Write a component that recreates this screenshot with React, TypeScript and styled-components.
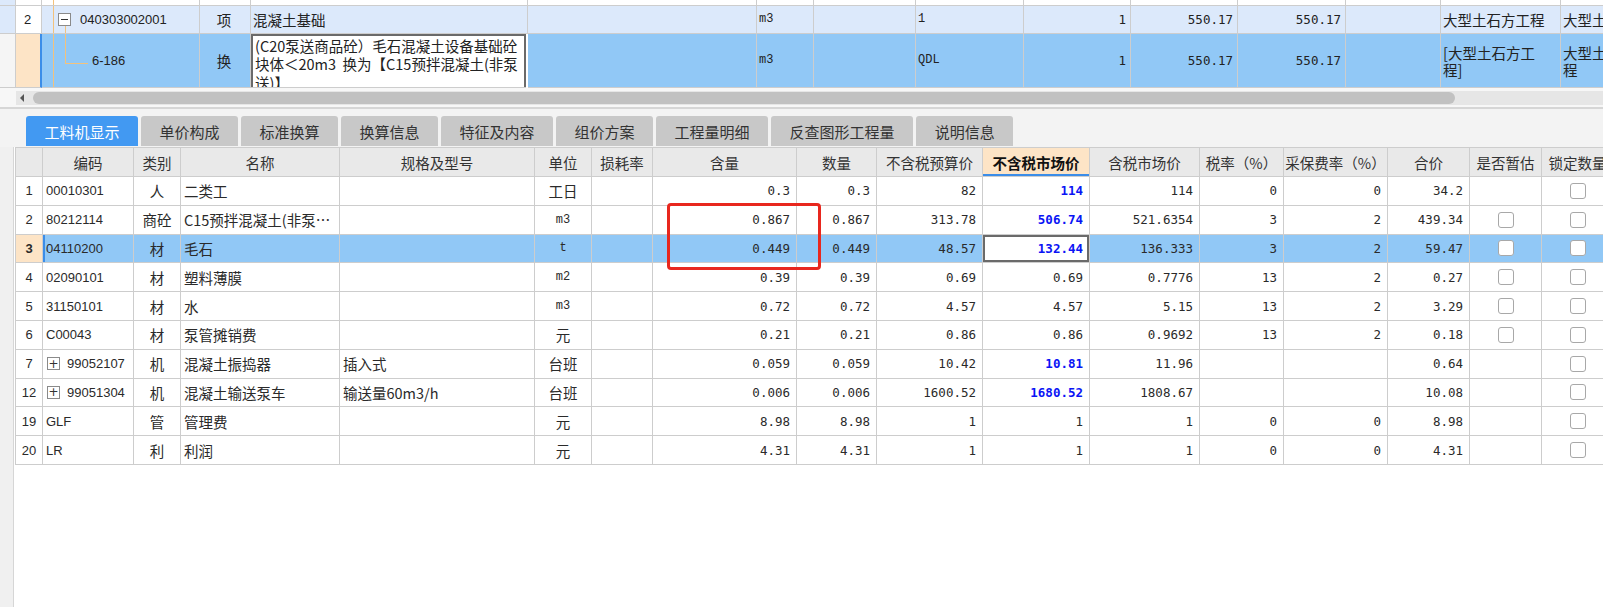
import React from 'react';
import styled, { createGlobalStyle, css } from 'styled-components';

const GlobalStyle = createGlobalStyle`
  html, body { margin: 0; padding: 0; }
  body {
    width: 1603px;
    height: 607px;
    overflow: hidden;
    background: #f3f3f3;
    font-family: "Noto Sans CJK SC", "Noto Sans", sans-serif;
    color: #222;
  }
  * { box-sizing: border-box; }
`;

type Align = 'left' | 'center' | 'right';
type FontKind = 'cjk' | 'num' | 'code' | 'mono';

const fontCss = (f: FontKind = 'cjk') => {
  switch (f) {
    case 'num':
      return css`font-family: "DejaVu Sans Mono", "Liberation Mono", monospace; font-size: 12.5px;`;
    case 'code':
      return css`font-family: "Liberation Sans", Arial, sans-serif; font-size: 13px;`;
    case 'mono':
      return css`font-family: "Liberation Mono", "DejaVu Sans Mono", monospace; font-size: 12px;`;
    default:
      return css`font-family: "Noto Sans CJK SC", "Noto Sans", sans-serif; font-size: 14.5px;`;
  }
};

const justify = (a: Align = 'left') =>
  a === 'right' ? 'flex-end' : a === 'center' ? 'center' : 'flex-start';

const LINE = '#cdcdcd';
const LIGHT_BLUE = '#dce9fb';
const SEL_BLUE = '#91c8f6';
const PEACH = '#fde4c6';
const ACCENT = '#3b8de8';
const ORANGE = '#f3c27c';

const Page = styled.div`
  width: 1603px;
  height: 607px;
  display: flex;
  flex-direction: column;
  overflow: hidden;
  background: #f3f3f3;
`;

/* ---------- top (bill items) grid ---------- */
const TopGrid = styled.div`
  display: grid;
  grid-template-columns: 16px 26px 158px 51px 277px 229px 57px 102px 108px 107px 107px 108px 95px 120px 80px;
  grid-template-rows: 6px 28px 54px;
  height: 88px;
  overflow: hidden;
  background: #fff;
`;

const TopCell = styled.div<{ $bg?: string; $align?: Align; $font?: FontKind; $sel?: boolean }>`
  position: relative;
  display: flex;
  align-items: center;
  justify-content: ${p => justify(p.$align)};
  padding: 0 4px 0 2px;
  border-right: 1px solid ${LINE};
  border-bottom: 1px solid ${LINE};
  background: ${p => p.$bg ?? '#fff'};
  overflow: hidden;
  white-space: pre;
  line-height: 17px;
  color: #222;
  ${p => fontCss(p.$font)}
  ${p => p.$sel && css`border-right: 2px solid ${ACCENT};`}
`;

const NameEditor = styled.div`
  background: #fff;
  box-shadow: inset 2px 2px 0 #6a6a6a, inset -2px 0 0 #6a6a6a;
  padding: 3px 4px 0 4px;
  margin-right: 2px;
  border-bottom: 1px solid ${LINE};
  white-space: pre;
  overflow: hidden;
  line-height: 18.3px;
  font-family: "Noto Sans CJK SC", "Noto Sans", sans-serif;
  font-size: 14.5px;
  color: #222;
`;

const VLine = styled.span<{ $left: number; $top: number; $bottom?: number; $h?: number }>`
  position: absolute;
  left: ${p => p.$left}px;
  top: ${p => p.$top}px;
  ${p => (p.$h !== undefined ? css`height: ${p.$h}px;` : css`bottom: ${p.$bottom ?? -1}px;`)}
  width: 1px;
  background: ${ORANGE};
`;

const HLine = styled.span<{ $left: number; $top: number; $w: number }>`
  position: absolute;
  left: ${p => p.$left}px;
  top: ${p => p.$top}px;
  width: ${p => p.$w}px;
  height: 1px;
  background: ${ORANGE};
`;

const CollapseBox = styled.span`
  position: absolute;
  left: 16px;
  top: 7px;
  width: 13px;
  height: 13px;
  border: 1px solid #8a8a8a;
  background: #fff;
  &::after {
    content: '';
    position: absolute;
    left: 2px;
    right: 2px;
    top: 5px;
    height: 1px;
    background: #333;
  }
`;

const TreeText = styled.span<{ $indent: number }>`
  margin-left: ${p => p.$indent}px;
  font-family: "Liberation Sans", Arial, sans-serif;
  font-size: 13px;
  color: #222;
`;

/* ---------- horizontal scroll bar ---------- */
const ScrollRow = styled.div`
  height: 19px;
  padding: 3px 0 0 16px;
  background: #f7f7f7;
`;

const ScrollTrack = styled.div`
  height: 14px;
  background: #e6e6e6;
  display: flex;
  align-items: center;
`;

const ArrowLeft = styled.span`
  width: 0;
  height: 0;
  margin-left: 4px;
  border-top: 4px solid transparent;
  border-bottom: 4px solid transparent;
  border-right: 4px solid #555;
`;

const Thumb = styled.div`
  margin-left: 9px;
  width: 1422px;
  height: 12px;
  border-radius: 6px;
  background: #c1c1c1;
`;

const Divider = styled.div`
  height: 2px;
  background: #d6d6d6;
`;

/* ---------- tabs ---------- */
const TabBar = styled.div`
  height: 38px;
  display: flex;
  align-items: flex-end;
  gap: 3px;
  padding: 0 0 1px 26px;
  background: #f3f3f3;
`;

const Tab = styled.div<{ $active?: boolean }>`
  height: 30px;
  padding: 0 18.5px;
  display: flex;
  align-items: center;
  border-radius: 3px 3px 0 0;
  font-family: "Noto Sans CJK SC", "Noto Sans", sans-serif;
  font-size: 15px;
  white-space: nowrap;
  background: ${p => (p.$active ? '#4299f2' : '#c8c8c8')};
  color: ${p => (p.$active ? '#fff' : '#333')};
`;

/* ---------- bottom (resource) grid ---------- */
const Bottom = styled.div`
  flex: 1;
  display: flex;
  min-height: 0;
`;

const LeftStrip = styled.div`
  width: 14px;
  flex: none;
  background: #f0f0f0;
  border-right: 1px solid #d6d6d6;
`;

const GridWrap = styled.div`
  position: relative;
  flex: 1;
  background: #fff;
  padding-left: 1px;
  overflow: hidden;
`;

const COLS = [27, 91, 47, 159, 195, 57, 61, 144, 80, 106, 107, 110, 84, 104, 82, 72, 72];

const Grid = styled.div`
  display: grid;
  grid-template-columns: ${COLS.map(c => `${c}px`).join(' ')};
  grid-template-rows: 29px;
  grid-auto-rows: 28.8px;
  width: ${COLS.reduce((a, b) => a + b, 0) + 1}px;
  border-left: 1px solid ${LINE};
  border-top: 1px solid ${LINE};
`;

const HeadCell = styled.div<{ $hot?: boolean }>`
  display: flex;
  align-items: center;
  justify-content: center;
  white-space: nowrap;
  overflow: hidden;
  background: ${p => (p.$hot ? PEACH : '#e9e9e9')};
  border-right: 1px solid ${LINE};
  border-bottom: 1px solid ${LINE};
  font-family: "Noto Sans CJK SC", "Noto Sans", sans-serif;
  font-size: 14.5px;
  color: #333;
  ${p =>
    p.$hot &&
    css`
      font-weight: 700;
      color: #111;
      box-shadow: inset 0 -2px 0 ${ACCENT};
    `}
`;

const Cell = styled.div<{
  $align?: Align;
  $font?: FontKind;
  $bg?: string;
  $bold?: boolean;
  $blue?: boolean;
  $focus?: boolean;
  $lead?: boolean;
}>`
  display: flex;
  align-items: center;
  justify-content: ${p => justify(p.$align)};
  padding: 0 ${p => (p.$align === 'right' ? 6 : 3)}px 0 3px;
  white-space: nowrap;
  overflow: hidden;
  border-right: 1px solid ${LINE};
  border-bottom: 1px solid ${LINE};
  background: ${p => p.$bg ?? '#fff'};
  color: ${p => (p.$blue ? '#0a14f5' : '#2a2a2a')};
  font-weight: ${p => (p.$bold || p.$blue ? 700 : 400)};
  ${p => fontCss(p.$font)}
  ${p => p.$focus && css`box-shadow: inset 0 0 0 2px #6a6a6a;`}
  ${p => p.$lead && css`box-shadow: inset 2px 0 0 ${ACCENT};`}
`;

const Expander = styled.span`
  width: 13px;
  height: 13px;
  margin: 0 7px 0 1px;
  border: 1px solid #8a8a8a;
  display: inline-flex;
  align-items: center;
  justify-content: center;
  font-family: "DejaVu Sans", sans-serif;
  font-size: 12px;
  line-height: 1;
  color: #333;
`;

const Check = styled.span`
  width: 16px;
  height: 16px;
  border: 1px solid #a8a8a8;
  border-radius: 3px;
  background: #fff;
`;

const Highlight = styled.div`
  position: absolute;
  left: 653px;
  top: 56px;
  width: 154px;
  height: 67px;
  border: 3px solid #e8271e;
  border-radius: 4px;
  pointer-events: none;
`;

type Row = {
  no: string;
  code: string;
  expand?: boolean;
  kind: string;
  name: string;
  spec: string;
  unit: string;
  unitMono?: boolean;
  qtyPer: string;
  qty: string;
  budget: string;
  market: string;
  marketBlue?: boolean;
  taxMarket: string;
  tax: string;
  fee: string;
  total: string;
  est: boolean;
  lock: boolean;
  selected?: boolean;
};

const rows: Row[] = [
  { no: '1', code: '00010301', kind: '人', name: '二类工', spec: '', unit: '工日', qtyPer: '0.3', qty: '0.3', budget: '82', market: '114', marketBlue: true, taxMarket: '114', tax: '0', fee: '0', total: '34.2', est: false, lock: true },
  { no: '2', code: '80212114', kind: '商砼', name: 'C15预拌混凝土(非泵…', spec: '', unit: 'm3', unitMono: true, qtyPer: '0.867', qty: '0.867', budget: '313.78', market: '506.74', marketBlue: true, taxMarket: '521.6354', tax: '3', fee: '2', total: '439.34', est: true, lock: true },
  { no: '3', code: '04110200', kind: '材', name: '毛石', spec: '', unit: 't', unitMono: true, qtyPer: '0.449', qty: '0.449', budget: '48.57', market: '132.44', marketBlue: true, taxMarket: '136.333', tax: '3', fee: '2', total: '59.47', est: true, lock: true, selected: true },
  { no: '4', code: '02090101', kind: '材', name: '塑料薄膜', spec: '', unit: 'm2', unitMono: true, qtyPer: '0.39', qty: '0.39', budget: '0.69', market: '0.69', taxMarket: '0.7776', tax: '13', fee: '2', total: '0.27', est: true, lock: true },
  { no: '5', code: '31150101', kind: '材', name: '水', spec: '', unit: 'm3', unitMono: true, qtyPer: '0.72', qty: '0.72', budget: '4.57', market: '4.57', taxMarket: '5.15', tax: '13', fee: '2', total: '3.29', est: true, lock: true },
  { no: '6', code: 'C00043', kind: '材', name: '泵管摊销费', spec: '', unit: '元', qtyPer: '0.21', qty: '0.21', budget: '0.86', market: '0.86', taxMarket: '0.9692', tax: '13', fee: '2', total: '0.18', est: true, lock: true },
  { no: '7', code: '99052107', expand: true, kind: '机', name: '混凝土振捣器', spec: '插入式', unit: '台班', qtyPer: '0.059', qty: '0.059', budget: '10.42', market: '10.81', marketBlue: true, taxMarket: '11.96', tax: '', fee: '', total: '0.64', est: false, lock: true },
  { no: '12', code: '99051304', expand: true, kind: '机', name: '混凝土输送泵车', spec: '输送量60m3/h', unit: '台班', qtyPer: '0.006', qty: '0.006', budget: '1600.52', market: '1680.52', marketBlue: true, taxMarket: '1808.67', tax: '', fee: '', total: '10.08', est: false, lock: true },
  { no: '19', code: 'GLF', kind: '管', name: '管理费', spec: '', unit: '元', qtyPer: '8.98', qty: '8.98', budget: '1', market: '1', taxMarket: '1', tax: '0', fee: '0', total: '8.98', est: false, lock: true },
  { no: '20', code: 'LR', kind: '利', name: '利润', spec: '', unit: '元', qtyPer: '4.31', qty: '4.31', budget: '1', market: '1', taxMarket: '1', tax: '0', fee: '0', total: '4.31', est: false, lock: true },
];

const headers = [
  '', '编码', '类别', '名称', '规格及型号', '单位', '损耗率', '含量', '数量',
  '不含税预算价', '不含税市场价', '含税市场价', '税率（%）', '采保费率（%）', '合价', '是否暂估', '锁定数量',
];

const tabs = ['工料机显示', '单价构成', '标准换算', '换算信息', '特征及内容', '组价方案', '工程量明细', '反查图形工程量', '说明信息'];

const ResourceRow: React.FC<{ r: Row }> = ({ r }) => {
  const bg = r.selected ? SEL_BLUE : '#fff';
  return (
    <>
      <Cell $align="center" $font="code" $bg={r.selected ? PEACH : '#fff'} $bold={r.selected}>{r.no}</Cell>
      <Cell $font="code" $bg={bg} $lead={r.selected}>
        {r.expand && <Expander>+</Expander>}
        {r.code}
      </Cell>
      <Cell $align="center" $bg={bg}>{r.kind}</Cell>
      <Cell $bg={bg}>{r.name}</Cell>
      <Cell $bg={bg}>{r.spec}</Cell>
      <Cell $align="center" $font={r.unitMono ? 'mono' : 'cjk'} $bg={bg}>{r.unit}</Cell>
      <Cell $bg={bg} />
      <Cell $align="right" $font="num" $bg={bg}>{r.qtyPer}</Cell>
      <Cell $align="right" $font="num" $bg={bg}>{r.qty}</Cell>
      <Cell $align="right" $font="num" $bg={bg}>{r.budget}</Cell>
      <Cell $align="right" $font="num" $bg={r.selected ? '#fff' : bg} $blue={r.marketBlue} $focus={r.selected}>{r.market}</Cell>
      <Cell $align="right" $font="num" $bg={bg}>{r.taxMarket}</Cell>
      <Cell $align="right" $font="num" $bg={bg}>{r.tax}</Cell>
      <Cell $align="right" $font="num" $bg={bg}>{r.fee}</Cell>
      <Cell $align="right" $font="num" $bg={bg}>{r.total}</Cell>
      <Cell $align="center" $bg={bg}>{r.est && <Check />}</Cell>
      <Cell $align="center" $bg={bg}>{r.lock && <Check />}</Cell>
    </>
  );
};

export default function App() {
  return (
    <>
      <GlobalStyle />
      <Page>
        <TopGrid>
          {/* partially visible row above */}
          <TopCell $bg={LIGHT_BLUE} />
          <TopCell />
          <TopCell><VLine $left={11} $top={0} /></TopCell>
          {Array.from({ length: 12 }).map((_, i) => (
            <TopCell key={`p${i}`} />
          ))}

          {/* bill row 2 */}
          <TopCell $bg={LIGHT_BLUE} />
          <TopCell $align="center" $font="code">2</TopCell>
          <TopCell $bg={LIGHT_BLUE}>
            <VLine $left={11} $top={0} />
            <CollapseBox />
            <VLine $left={23} $top={20} />
            <TreeText $indent={36}>040303002001</TreeText>
          </TopCell>
          <TopCell $bg={LIGHT_BLUE} $align="center">项</TopCell>
          <TopCell $bg={LIGHT_BLUE}>混凝土基础</TopCell>
          <TopCell $bg={LIGHT_BLUE} />
          <TopCell $bg={LIGHT_BLUE} $font="mono">m3</TopCell>
          <TopCell $bg={LIGHT_BLUE} />
          <TopCell $bg={LIGHT_BLUE} $font="mono">1</TopCell>
          <TopCell $bg={LIGHT_BLUE} $align="right" $font="num">1</TopCell>
          <TopCell $bg={LIGHT_BLUE} $align="right" $font="num">550.17</TopCell>
          <TopCell $bg={LIGHT_BLUE} $align="right" $font="num">550.17</TopCell>
          <TopCell $bg={LIGHT_BLUE} />
          <TopCell $bg={LIGHT_BLUE}>大型土石方工程</TopCell>
          <TopCell $bg={LIGHT_BLUE}>大型土石方工程</TopCell>

          {/* selected sub item */}
          <TopCell $bg="#f5f5f5" />
          <TopCell $bg={PEACH} $sel />
          <TopCell $bg={SEL_BLUE}>
            <VLine $left={11} $top={0} />
            <VLine $left={23} $top={0} $h={29} />
            <HLine $left={23} $top={29} $w={23} />
            <TreeText $indent={48}>6-186</TreeText>
          </TopCell>
          <TopCell $bg={SEL_BLUE} $align="center">换</TopCell>
          <NameEditor>{'(C20泵送商品砼）毛石混凝土设备基础砼\n块体＜20m3  换为【C15预拌混凝土(非泵\n送)】'}</NameEditor>
          <TopCell $bg={SEL_BLUE} />
          <TopCell $bg={SEL_BLUE} $font="mono">m3</TopCell>
          <TopCell $bg={SEL_BLUE} />
          <TopCell $bg={SEL_BLUE} $font="mono">QDL</TopCell>
          <TopCell $bg={SEL_BLUE} $align="right" $font="num">1</TopCell>
          <TopCell $bg={SEL_BLUE} $align="right" $font="num">550.17</TopCell>
          <TopCell $bg={SEL_BLUE} $align="right" $font="num">550.17</TopCell>
          <TopCell $bg={SEL_BLUE} />
          <TopCell $bg={SEL_BLUE}>{'[大型土石方工\n程]'}</TopCell>
          <TopCell $bg={SEL_BLUE}>{'大型土石方\n程'}</TopCell>
        </TopGrid>

        <ScrollRow>
          <ScrollTrack>
            <ArrowLeft />
            <Thumb />
          </ScrollTrack>
        </ScrollRow>
        <Divider />

        <TabBar>
          {tabs.map((t, i) => (
            <Tab key={t} $active={i === 0}>{t}</Tab>
          ))}
        </TabBar>

        <Bottom>
          <LeftStrip />
          <GridWrap>
            <Grid>
              {headers.map((h, i) => (
                <HeadCell key={i} $hot={h === '不含税市场价'}>{h}</HeadCell>
              ))}
              {rows.map(r => (
                <ResourceRow key={r.no} r={r} />
              ))}
            </Grid>
            <Highlight />
          </GridWrap>
        </Bottom>
      </Page>
    </>
  );
}
